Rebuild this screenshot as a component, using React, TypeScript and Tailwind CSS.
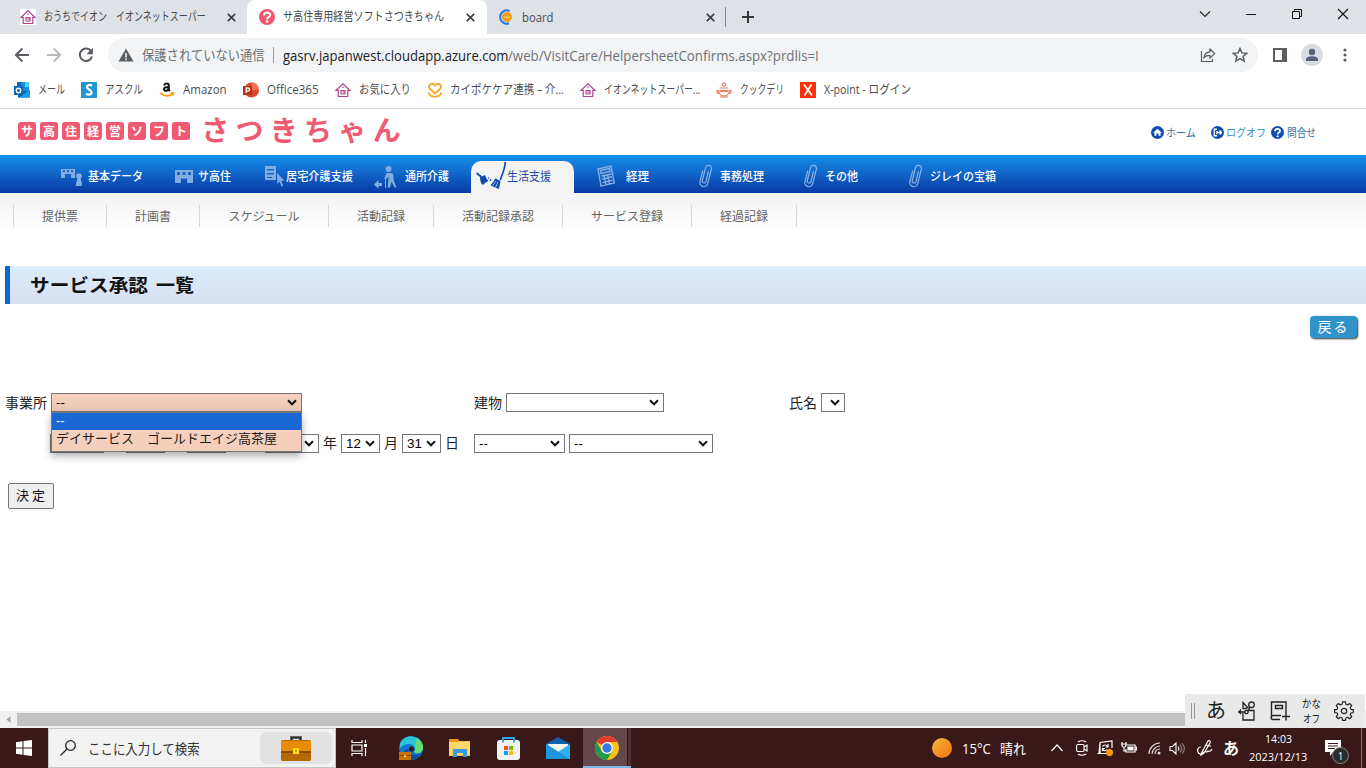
import React, { useLayoutEffect, useRef, useState } from "react";

const UI = "font-['Open_Sans','Noto_Sans_CJK_JP',sans-serif]";

/** Keeps a label on one line and condenses it to the width of its box. */
function Fit({ className = "", children }: { className?: string; children: React.ReactNode }) {
  const box = useRef<HTMLSpanElement>(null);
  const text = useRef<HTMLSpanElement>(null);
  const [scale, setScale] = useState(1);
  useLayoutEffect(() => {
    if (box.current && text.current) setScale(box.current.clientWidth / text.current.offsetWidth);
  }, []);
  return (
    <span ref={box} className={"block shrink-0 whitespace-nowrap " + className}>
      <span ref={text} className="inline-block origin-left" style={{ transform: `scaleX(${scale})` }}>
        {children}
      </span>
    </span>
  );
}

/* ---------- browser icons ---------- */

const Aeon = () => (
  <svg className="h-4 w-4 shrink-0" viewBox="0 0 16 16" fill="none" stroke="#b0438c" strokeWidth="1.2">
    <path fill="#fff" stroke="none" d="M0 0h16v16H0z" />
    <path d="M1.200 8.300 8 1.800l6.800 6.500h-2V14.500H3.200V8.300z" />
    <path d="M6 8.500h4V12H6zM8 4.500v1.500" />
    <path d="M7.500 10h2" />
  </svg>
);

const Cross = () => (
  <svg className="h-[9px] w-[9px] shrink-0" viewBox="0 0 9 9" stroke="#3c4043" strokeWidth="1.7">
    <path d="M.8.8l7.4 7.4M8.2.8.8 8.2" />
  </svg>
);

const Question = ({ className, color }: { className: string; color: string }) => (
  <svg className={className} viewBox="0 0 16 16" fill="none">
    <circle cx="8" cy="8" r="8" fill={color} />
    <path d="M5 6.400c0-3.900 6.200-3.700 6.200-.4 0 2-3 1.900-3 4.200" stroke="#fff" strokeWidth="2.200" />
    <circle cx="8.200" cy="12.600" r="1.300" fill="#fff" />
  </svg>
);

function TabStrip() {
  return (
    <div className="flex h-[34px] items-center bg-[#dee1e6] text-[12px] text-[#45494d]">
      <div className="flex h-full w-[247px] items-center pl-5">
        <Aeon />
        <Fit className="ml-2 w-[162px]">おうちでイオン　イオンネットスーパー</Fit>
        <span className="ml-[21px]"><Cross /></span>
      </div>
      <div className="flex h-full w-[240px] items-center rounded-t-[8px] bg-white pl-3">
        <Question className="h-4 w-4 shrink-0" color="#f1566f" />
        <Fit className="ml-2 w-[161px]">サ高住専用経営ソフトさつきちゃん</Fit>
        <span className="ml-[22px]"><Cross /></span>
      </div>
      <div className="flex h-full w-[239px] items-center pl-[11px]">
        <svg className="h-4 w-4 shrink-0" viewBox="0 0 16 16" fill="none">
          <path d="M11.5 2A6.6 6.6 0 1 0 11 14.2" stroke="#2478e8" strokeWidth="2" />
          <circle cx="9" cy="8" r="4.900" fill="#f59a0c" />
          <path d="M6 8.200h6" stroke="#ffd28a" strokeWidth="1.2" />
        </svg>
        <Fit className="ml-2 w-[31px] pt-px text-[12px]">board</Fit>
        <span className="ml-[153px]"><Cross /></span>
        <span className="ml-[10px] h-5 w-px bg-[#86898d]" />
      </div>
      <svg className="ml-[16px] h-[12px] w-[12px]" viewBox="0 0 12 12" stroke="#36393c" strokeWidth="2">
        <path d="M6 0v12M0 6h12" />
      </svg>
      <div className="ml-auto flex h-full w-[184px] items-start pt-[8px]">
        <svg className="h-[12px] w-[46px]" viewBox="0 0 46 12" fill="none" stroke="#222" strokeWidth="1.1"><path d="M18 3.5 23 8.5l5-5" /></svg>
        <svg className="h-[12px] w-[46px]" viewBox="0 0 46 12" stroke="#111"><path d="M18 6.5h10" /></svg>
        <svg className="h-[12px] w-[46px]" viewBox="0 0 46 12" fill="none" stroke="#111"><path d="M18.5 3.5h7v7h-7zM20.500 3.500v-2h7v7h-2" /></svg>
        <svg className="h-[12px] w-[46px]" viewBox="0 0 46 12" stroke="#111" strokeWidth="1.1"><path d="m18 1 10 10m0-10L18 11" /></svg>
      </div>
    </div>
  );
}

function Toolbar() {
  return (
    <div className="flex h-[42px] items-center bg-white pl-[14px]">
      <svg className="h-4 w-4" viewBox="0 0 16 16" fill="none" stroke="#5a5e62" strokeWidth="1.9"><path d="M15 8H2M8.300 1.500 1.800 8l6.500 6.500" /></svg>
      <svg className="ml-4 h-4 w-4" viewBox="0 0 16 16" fill="none" stroke="#b8babc" strokeWidth="1.9"><path d="M1 8h13M7.700 1.500 14.200 8l-6.500 6.500" /></svg>
      <svg className="ml-4 h-4 w-4" viewBox="0 0 16 16" fill="none" stroke="#5a5e62" strokeWidth="2"><path d="M13.300 4.500A6.200 6.200 0 1 0 14 9.500" /><path d="M14.900.8v6.400H8.500z" fill="#5a5e62" stroke="none" /></svg>
      <div className="ml-[14px] flex h-[34px] w-[1150px] items-center rounded-full bg-[#f1f3f4] pl-[10px]">
        <svg className="h-4 w-4" viewBox="0 0 16 16"><path d="M8 1.500 15.500 14.500H.5z" fill="#5a5e62" /><path d="M8 6v4.500M8 11.500v1.700" stroke="#fff" strokeWidth="1.4" /></svg>
        <Fit className="ml-2 w-[123px] pb-px text-[14px] text-[#6d7175]">保護されていない通信</Fit>
        <span className="ml-2 h-4 w-px bg-[#9b9ea2]" />
        <Fit className="ml-[9px] w-[225px] text-[14px] text-[#202124]">gasrv.japanwest.cloudapp.azure.com</Fit>
        <Fit className="w-[311px] text-[14px] text-[#6f7276]">/web/VisitCare/HelpersheetConfirms.aspx?prdlis=I</Fit>
        <svg className="ml-auto h-[16px] w-[16px]" viewBox="0 0 16 16" fill="none" stroke="#5a5e62" strokeWidth="1.2"><path d="M1.500 4v10.500h11V12M4 10.500c.5-4 3-5.500 6-5.700V2l4.700 4.600L10 11V8.300c-3-.1-4.700.8-6 2.200z" /></svg>
        <svg className="ml-[16px] mr-[10px] h-4 w-4" viewBox="0 0 16 16" fill="none" stroke="#5a5e62" strokeWidth="1.5"><path d="m8 1.500 1.900 4.400 4.800.4-3.600 3.200 1.100 4.700L8 11.700l-4.200 2.500 1.100-4.700L1.300 6.300l4.800-.4z" /></svg>
      </div>
      <svg className="ml-[15px] h-[14px] w-[14px]" viewBox="0 0 14 14"><path d="M1 1h12v12H1z" fill="none" stroke="#5a5e62" strokeWidth="2" /><path d="M9 1h4v12H9z" fill="#5a5e62" /></svg>
      <svg className="ml-[14px] h-[22px] w-[22px]" viewBox="0 0 22 22" fill="#55627a"><circle cx="11" cy="11" r="11" fill="#dadce2" /><circle cx="11" cy="8" r="3.2" /><path d="M5 17v-1.500c0-4.200 12-4.200 12 0V17z" /></svg>
      <svg className="ml-[20px] h-[14px] w-[4px]" viewBox="0 0 4 14" fill="#5a5e62"><circle cx="2" cy="2" r="1.600" /><circle cx="2" cy="7" r="1.600" /><circle cx="2" cy="12" r="1.600" /></svg>
    </div>
  );
}

function Bookmark({ icon, children }: { icon: React.ReactNode; children: React.ReactNode }) {
  return <div className="mr-4 flex items-center gap-2">{icon}{children}</div>;
}

function Bookmarks() {
  const i = "h-4 w-4 shrink-0";
  return (
    <div className="flex h-[33px] items-center border-b border-[#d9dbde] bg-white pb-1 pl-[14px] text-[12px] text-[#4a4d51]">
      <Bookmark icon={<svg className={i} viewBox="0 0 16 16"><path fill="#1490df" d="M3 0h12v9H3z" /><path fill="#50d0ff" d="M11 0h4v5h-4z" /><path fill="#1066b5" d="M3 0h4v5H3z" /><path fill="#0a62ad" d="M4 9h12v6.500H4z" /><path fill="#1a9be8" d="M16 7.500v8H5z" /><path fill="#0364b8" d="M0 4h9v9H0z" /><circle cx="4.500" cy="8.500" r="2.200" fill="none" stroke="#fff" strokeWidth="1.400" /></svg>}><Fit className="w-[27px]">メール</Fit></Bookmark>
      <Bookmark icon={<svg className={i} viewBox="0 0 16 16"><path fill="#2196d2" d="M0 0h16v16H0z" /><path d="M11 3.700C8.500 2 5.500 3.600 6 5.500c.5 2 4.300 2.200 4.500 4.700.1 2.500-3 3-5.500 1.600" fill="none" stroke="#fff" strokeWidth="2.300" /></svg>}><Fit className="w-[38px]">アスクル</Fit></Bookmark>
      <Bookmark icon={<svg className={i} viewBox="0 0 16 16" fill="none"><path d="M5 3.500C6 .8 9.800 1 9.800 3.500V7c0 1 .5 1.500 1 2M9.600 5C6.500 5 5 5.500 5 7.200c0 2.600 4.600 2 4.600-1" stroke="#111" strokeWidth="2" /><path d="M1 11c4.500 3.500 9 3.500 12.500 1M11.500 11l3-.2-.7 3" stroke="#f5a21b" strokeWidth="1.700" /></svg>}><Fit className="w-[44px]">Amazon</Fit></Bookmark>
      <Bookmark icon={<svg className={i} viewBox="0 0 16 16"><circle cx="8.500" cy="8" r="7.500" fill="#d8482a" /><path d="M8.500.5A7.500 7.500 0 0 1 16 8H8.500z" fill="#f0744e" /><path fill="#b7341a" d="M0 4h9v9H0z" /><path d="M3.200 11V6h1.600c2.400 0 2.400 3.200 0 3.200H3.500" fill="none" stroke="#fff" strokeWidth="1.300" /></svg>}><Fit className="w-[52px]">Office365</Fit></Bookmark>
      <Bookmark icon={<Aeon />}><Fit className="w-[52px]">お気に入り</Fit></Bookmark>
      <Bookmark icon={<svg className={i} viewBox="0 0 16 16" fill="none" stroke="#f4ac2a" strokeWidth="1.900"><path d="M8 11.500 2.600 6.500C.5 3.500 4.800-.3 8 3.500c3.200-3.800 7.500 0 5.400 3z" /><path d="M1.500 10.500c1 3.300 3.500 4.200 6.500 4.200s5.500-.9 6.500-4.200" /></svg>}><Fit className="-ml-px w-[114px]">カイポケケア連携 – 介...</Fit></Bookmark>
      <Bookmark icon={<Aeon />}><Fit className="w-[96px]">イオンネットスーパー...</Fit></Bookmark>
      <Bookmark icon={<svg className={i} viewBox="0 0 16 16" fill="none" stroke="#e98267" strokeWidth="1.200"><circle cx="8" cy="2.500" r="1.600" /><path d="M3.500 6h9M2.500 8c0 8 11 8 11 0M2.500 8.500H.7c0 2 1 3 2.500 3M13.500 8.500h1.800c0 2-1 3-2.500 3" /><path d="M3.500 9h9" strokeWidth="2.200" /><path d="M4 15h8" /></svg>}><Fit className="w-[44px]">クックデリ</Fit></Bookmark>
      <Bookmark icon={<svg className={i} viewBox="0 0 16 16"><path fill="#fa3205" d="M0 0h16v16H0z" /><path d="m4 2.500 8 11m-.5-11-7 11" stroke="#fff" strokeWidth="1.700" /></svg>}><Fit className="w-[87px]">X-point - ログイン</Fit></Bookmark>
    </div>
  );
}

/* ---------- web page ---------- */

function Header() {
  return (
    <header className="flex h-[46px] items-center bg-white pl-[18px] text-[#ef5a72]">
      <div className="flex gap-1 pb-[2px] text-[12px] font-bold text-white">
        {"サ高住経営ソフト".split("").map((c, n) => (
          <span key={n} className="flex h-[18px] w-[18px] items-center justify-center rounded-[3px] bg-[#ef5a72] pb-px">{c}</span>
        ))}
      </div>
      <div className="ml-[8px] flex pb-[7px] text-[28px] leading-none font-bold">
        {"さつきちゃん".split("").map((c, n) => (
          <span key={n} className="w-[34.300px] text-center">{c}</span>
        ))}
      </div>
      <div className="ml-auto flex items-center pr-[50px] text-[11px] text-[#2f6f9f]">
        <svg className="h-[13px] w-[13px]" viewBox="0 0 12 12"><circle cx="6" cy="6" r="6" fill="#124db0" /><path d="M2 6.300 6 2.500l4 3.800H8.800V9H7V7H5v2H3.200V6.300z" fill="#fff" /></svg>
        <Fit className="ml-[2px] w-[30px]">ホーム</Fit>
        <svg className="ml-[15px] h-[13px] w-[13px]" viewBox="0 0 12 12" fill="none" stroke="#fff" strokeWidth="1.200"><circle cx="6" cy="6" r="6" fill="#124db0" stroke="none" /><path d="M5.500 3H3v6h2.500M5.500 4.500v3M5.500 6h4M8 4.200 9.700 6 8 7.800" /></svg>
        <Fit className="ml-[2px] w-[40px] text-[#3b90c8]">ログオフ</Fit>
        <Question className="ml-[5px] h-[13px] w-[13px]" color="#124db0" />
        <Fit className="ml-[3px] w-[29px]">問合せ</Fit>
      </div>
    </header>
  );
}

const Clip = () => (
  <svg className="h-6 w-[14px]" viewBox="0 0 14 24" fill="none" stroke="#8db2e3" strokeWidth="1.200">
    <path transform="rotate(14 7 12)" d="M2.500 7.500v11.500a4 4 0 0 0 8 0V4a3 3 0 0 0-6 0v13.500a1.900 1.900 0 0 0 3.800 0V7" />
  </svg>
);

function Nav() {
  const cell = "flex h-full items-start pt-[9px]";
  const label = "mt-[3px]";
  return (
    <nav className="flex h-[38px] bg-gradient-to-b from-[#168fe9] via-[#1164c8] to-[#0b39a3] pl-[61px] text-[12px] leading-[18px] font-medium text-white">
      <div className={cell + " w-[114px]"}>
        <svg className="mt-[4px] h-[18px] w-[21px]" viewBox="0 0 21 18" fill="#83ade0"><path fillRule="evenodd" d="M0 1h14v9h-4V6H4v4H0zm2 1v2h2V2zm4 0v2h2V2zm4 0v2h2V2z" /><circle cx="18" cy="8" r="2.800" /><path d="m16.500 10-2 8h7l-2-8z" /></svg>
        <Fit className={label + " ml-[6px] w-[55px]"}>基本データ</Fit>
      </div>
      <div className={cell + " w-[90px]"}>
        <svg className="mt-[6px] h-[13px] w-[18px]" viewBox="0 0 18 13" fill="#83ade0"><path fillRule="evenodd" d="M0 0h18v13h-6V8.500H6V13H0zm2 2v3h3V2zm5.500 0v3h3V2zM13 2v3h3V2z" /></svg>
        <Fit className={label + " ml-[5px] w-[33px]"}>サ高住</Fit>
      </div>
      <div className={cell + " w-[109px]"}>
        <svg className="mt-[2px] h-[21px] w-[20px]" viewBox="0 0 20 21" fill="#83ade0"><path fillRule="evenodd" d="M0 0h11v14H0zm2 3v1.500h7V3zm0 4v1.500h7V7zm0 4v1h5v-1z" /><path d="m12 7 .3 11 2.200-2.400 2 5 1.800-.7-2-5 3-.5z" /></svg>
        <Fit className={label + " ml-px w-[67px]"}>居宅介護支援</Fit>
      </div>
      <div className={cell + " w-[97px]"}>
        <svg className="mt-[2px] h-[22px] w-[23px]" viewBox="0 0 23 22" fill="#83ade0"><circle cx="14.500" cy="3" r="3" /><path d="M12.500 7h4.500c1.500 0 2 1 2.300 3l.6 5 2.600 6.500h-2L17.500 15.500l-1.500 6H13.500l1-8V10.500l-2.500 3-1.700-.9z" /><path d="M11.500 13v9" stroke="#83ade0" /><path d="M0 18.500 4.500 14v3H8v3H4.500v3z" /></svg>
        <Fit className={label + " ml-[8px] w-[44px]"}>通所介護</Fit>
      </div>
      <div className="mt-[6px] flex h-8 w-[103px] items-start rounded-t-[10px] bg-[#f3f3f3] pl-[5px] font-normal text-[#1c4ea8]">
        <svg className="h-7 w-[30px]" viewBox="0 0 30 28" fill="#0f47b0"><path d="m.5 12 5 4" stroke="#0f47b0" strokeWidth="1.800" /><path d="M4 15.500c2 .3 3.500-.5 5-1.500.5 2 1.500 4 3.500 6-2 .8-4 2-5.500 4C4.500 22.500 4 19 4 15.500z" /><circle cx="12.500" cy="17" r=".7" /><circle cx="14.500" cy="19" r=".9" /><path d="M29.300 1c-.3 7-3 12-5 18" stroke="#0f47b0" strokeWidth="1.700" fill="none" /><path d="m19.500 17.500 5 2.500-1.500 8-8.500-3.500z" /><path d="m16.500 25 3.500-5M19.500 26.500l2.500-5.500" stroke="#f3f3f3" strokeWidth=".7" /></svg>
        <Fit className="mt-[6px] ml-px w-[44px]">生活支援</Fit>
      </div>
      <div className={cell + " w-[125px] pl-[23px]"}>
        <svg className="mt-[1px] h-[22px] w-[18px]" viewBox="0 0 18 22" fill="none" stroke="#83ade0" strokeWidth="1.400"><path d="M1 4 14 1l3.300 17L4 21zM3.500 5.500l9-2 .5 3-9 2zM4.500 11l10-2M5 14l10-2.200M5.500 17.500l10-2.200M7 10l2 10M10.500 9.500l2 9.500" /></svg>
        <Fit className={label + " ml-[11px] w-[23px]"}>経理</Fit>
      </div>
      <div className={cell + " w-[105px]"}><Clip /><Fit className={label + " ml-[7px] w-[44px]"}>事務処理</Fit></div>
      <div className={cell + " w-[105px]"}><Clip /><Fit className={label + " ml-[7px] w-[33px]"}>その他</Fit></div>
      <div className={cell}><Clip /><Fit className={label + " ml-[7px] w-[66px]"}>ジレイの宝箱</Fit></div>
    </nav>
  );
}

function SubNav() {
  const c = "flex h-[22px] items-center justify-center border-l border-[#d9d9d9] pb-px";
  return (
    <div className="flex h-10 bg-gradient-to-b from-[#f2f2f2] to-white pt-3 pl-[13px] text-[12px] text-[#646464]">
      <div className={c + " w-[93px]"}>提供票</div>
      <div className={c + " w-[93px]"}>計画書</div>
      <div className={c + " w-[129px]"}>スケジュール</div>
      <div className={c + " w-[105px]"}>活動記録</div>
      <div className={c + " w-[129px]"}>活動記録承認</div>
      <div className={c + " w-[129px]"}>サービス登録</div>
      <div className={c + " w-[106px] border-r"}>経過記録</div>
    </div>
  );
}

function Select({ className, children }: { className: string; children?: React.ReactNode }) {
  return (
    <span className={"flex h-[19px] shrink-0 items-center justify-between border border-[#767676] pr-[4px] pl-[4px] font-['Liberation_Sans','Noto_Sans_CJK_JP',sans-serif] text-[13.333px] leading-none text-black " + className}>
      <span>{children}</span>
      <svg className="h-[7px] w-[10px] shrink-0" viewBox="0 0 10 7" fill="none" stroke="#111" strokeWidth="2"><path d="m1 1.300 4 4 4-4" /></svg>
    </span>
  );
}

function Form() {
  return (
    <main className="text-[14px] leading-[19px] text-[#222]">
      <div className="flex h-[19px] items-center pl-[5px]">
        <span className="w-[46px]">事業所</span>
        <div className="relative">
          <Select className="w-[251px] bg-gradient-to-b from-[#f7d1bf] to-[#e9c5b4]">--</Select>
          <div className="absolute top-[19px] left-0 z-10 h-[40px] w-[251px] border border-[#767676] bg-[#f6cfbc] font-['Liberation_Sans','Noto_Sans_CJK_JP',sans-serif] text-[13px] leading-[17px] text-[#201a18] shadow-[0_4px_8px_rgba(0,0,0,0.32)]">
            <div className="h-[17px] bg-[#1967d2] pl-[4px] leading-[16px] text-white">--</div>
            <Fit className="ml-[4px] w-[221px]">デイサービス　ゴールドエイジ高茶屋</Fit>
          </div>
        </div>
        <span className="ml-[172px] w-8">建物</span>
        <Select className="w-[158px]" />
        <span className="ml-[125px] w-8">氏名</span>
        <Select className="w-[24px]" />
      </div>
      <div className="mt-[22px] flex h-[19px] items-center pl-[50px]">
        <Select className="w-[54px]" />
        <Select className="ml-[22px] w-[39px]" />
        <Select className="ml-[22px] w-[39px]" />
        <Select className="ml-[39px] w-[54px]" />
        <span className="w-[22px] pb-[2px] text-center">年</span>
        <Select className="w-[39px]">12</Select>
        <span className="w-[22px] pb-[2px] text-center">月</span>
        <Select className="w-[39px]">31</Select>
        <span className="w-[22px] pb-[2px] text-center">日</span>
        <Select className="ml-[11px] w-[91px]">--</Select>
        <Select className="ml-1 w-[144px]">--</Select>
      </div>
      <button className="mt-[30px] ml-2 flex h-[26px] w-[46px] items-center justify-center rounded-[2px] border border-[#767676] bg-[#efefef] pr-px pb-[3px] text-[13px] text-[#111]">決 定</button>
    </main>
  );
}

/* ---------- desktop ---------- */

function ImeBar() {
  const s = "#222";
  return (
    <div className="absolute top-[694px] left-[1185px] z-20 flex h-[34px] w-[180px] items-center bg-[#e9e9e9] pb-px text-[#1c1c1c]">
      <span className="ml-[6px] h-4 w-[4px] border-x border-[#999]" />
      <span className="ml-[11px] w-5 text-center text-[20px] leading-none">あ</span>
      <svg className="ml-[12px] h-5 w-[18px]" viewBox="0 0 18 20" fill="none" stroke={s} strokeWidth="1.300"><path d="M5 12v7h11V9.500H9M5 8V1.500l5.500 6M5 7.500h4" /><circle cx="13.500" cy="3.800" r="2.800" /><path d="m12 6-1.500 3.500" /><path d="M0 11h7M3 8.500l-2 2.500 2 2" /><circle cx="8.500" cy="11" r="1.700" /></svg>
      <svg className="ml-[14px] h-5 w-[20px]" viewBox="0 0 20 20" fill="none" stroke={s} strokeWidth="1.400"><path d="M10 18.500H3c-3 0-2-4 0-4h8M1.500 17V1H16v11M5.500 4.500h7v3h-7zM16 11.500v8M12 15.500h8" /></svg>
      <div className="ml-[12px] w-[20px] text-center text-[11px] leading-[15px]"><Fit className="w-[19px]">かな</Fit><Fit className="ml-px w-[17px]">オフ</Fit></div>
      <svg className="ml-[12px] h-5 w-5" viewBox="0 0 20 20" fill="none" stroke={s} strokeWidth="1.200" strokeLinejoin="round"><circle cx="10" cy="10" r="2.700" /><path d="M8.500.8h3l.4 2.500 1.700.7 2-1.500 2.100 2.100-1.500 2 .7 1.700 2.400.3v3l-2.400.4-.7 1.600 1.500 2.100-2.100 2-2-1.400-1.700.7-.4 2.400h-3l-.4-2.400-1.700-.7-2 1.400-2.100-2 1.500-2.100-.7-1.600-2.500-.4v-3l2.500-.3.7-1.700-1.500-2 2.100-2.100 2 1.500 1.700-.7z" /></svg>
    </div>
  );
}

function Taskbar() {
  return (
    <footer className="flex h-10 items-center bg-[#391819] text-white">
      <div className="flex w-12 justify-center"><svg className="h-4 w-4" viewBox="0 0 16 16" fill="#fff"><path d="M0 2.200 6.500 1.300v6.200H0zM7.500 1.100 16 0v7.500H7.500zM0 8.500h6.500v6.200L0 13.800zM7.500 8.500H16V16l-8.500-1.100z" /></svg></div>
      <div className="flex h-10 w-[288px] items-center border border-[#c4c4c4] bg-[#f2f2f2] pl-[11px] text-[14px] text-[#333]">
        <svg className="h-4 w-4" viewBox="0 0 16 16" fill="none" stroke="#222" strokeWidth="1.300"><circle cx="10.500" cy="5.500" r="4.800" /><path d="M7 9 .5 15.500" /></svg>
        <Fit className="ml-[12px] w-[112px]">ここに入力して検索</Fit>
        <div className="ml-[60px] flex h-8 w-[72px] items-center justify-center rounded-[6px] bg-[#e2e2e2]">
          <svg className="h-[25px] w-[30px]" viewBox="0 0 30 25"><path d="M10.500 5V1.500h9V5" fill="none" stroke="#343434" strokeWidth="2.500" /><rect y="4" width="30" height="21" rx="1.500" fill="#b56a05" /><path d="M0 5h30v11H0z" fill="#e88b06" /><path d="M0 15h30v2H0z" fill="#8c4a00" /><path d="M12 12h6v6h-6z" fill="#ffdc26" /><path d="M14 14h2v2h-2z" fill="#d69a00" /></svg>
        </div>
      </div>
      <svg className="ml-[15px] h-4 w-[17px]" viewBox="0 0 17 16" fill="none" stroke="#fff" strokeWidth="1.200"><path d="M1 0v2.500h10V0M1 5h10v6H1zM1 16v-2.500h10V16M14.500 0v3M14.500 8v8" /><path d="M13 4h3v3h-3z" fill="#fff" stroke="none" /></svg>
      <svg className="ml-[31px] h-6 w-6" viewBox="0 0 24 24"><circle cx="12" cy="12" r="12" fill="#1177d1" /><path d="M1 8C4-3 24-2 24 12c0 5-6 6-9 4 2-2 1-8-5-8-4 0-7 2-9 4z" fill="#2fc2d5" /><path d="M18 2c5 3 7 8 5.500 12-2 4-6 4-8.500 2 2-2 2-4 1-6z" fill="#67dc70" /><path d="M9 13c0 5 6 8 12 5-3 7-12 8-16 2-1-4 0-7 4-7z" fill="#124d9c" /><circle cx="12.500" cy="13" r="2.600" fill="#391819" /><path d="M0 16h12v8H0z" fill="#c67408" /><path d="M0 19h12v1H0z" fill="#884500" /><path d="M5 19h2v2H5z" fill="#ffd323" /></svg>
      <svg className="ml-[26px] h-[20px] w-[22px]" viewBox="0 0 22 20"><path d="M0 1h9l1 2h11v15H0z" fill="#f5c247" /><path d="M0 1h9v3H0z" fill="#e49b0c" /><path d="M0 4h21v13H0z" fill="#ffd66b" /><path d="M4 11h14v8h-4v-4H8v4H4z" fill="#369be0" /></svg>
      <svg className="ml-[26px] h-6 w-[23px]" viewBox="0 0 23 24"><rect y="4" width="23" height="20" rx="3" fill="#f2f2f2" /><path d="M6 6.500V2h11v4.500" fill="none" stroke="#27a7e8" strokeWidth="1.800" /><path d="M7 10h4v4H7z" fill="#f25022" /><path d="M12 10h4v4h-4z" fill="#7fba00" /><path d="M7 15h4v4H7z" fill="#00a4ef" /><path d="M12 15h4v4h-4z" fill="#ffb900" /></svg>
      <svg className="ml-[26px] h-6 w-6" viewBox="0 0 24 24"><path d="M0 8 12 1l12 7v6H0z" fill="#1060b0" /><path d="M2 8h20v8H2z" fill="#f4f4f4" /><path d="m0 8 12 8 12-8v15H0z" fill="#2bb2ee" /><path d="m0 8 24 15H0z" fill="#1d96dc" /></svg>
      <div className="ml-[13px] flex h-10 w-[48px] border-b-2 border-[#76b9ed] bg-[#64474a]">
        <div className="flex w-[44px] items-center pt-[2px] pl-3"><svg className="h-6 w-6" viewBox="0 0 24 24"><circle cx="12" cy="12" r="12" fill="#fbc116" /><path d="M12 12 1.600 6A12 12 0 0 1 22.400 6H12z" fill="#e33b2e" /><path d="M1.600 6A12 12 0 0 0 12 24l5.200-9-5.200 3-5.200-3z" fill="#229a4c" /><circle cx="12" cy="12" r="6" fill="#fff" /><circle cx="12" cy="12" r="4.700" fill="#3478ea" /></svg></div>
        <div className="w-[4px] border-l border-[#2d1415] bg-[#503235]" />
      </div>
      <span className="ml-[301px] h-5 w-5 rounded-full bg-gradient-to-br from-[#f6b637] to-[#f06f13]" />
      <Fit className="ml-[10px] w-[29px] text-[14px]">15°C</Fit>
      <Fit className="ml-[9px] w-[26px] text-[14px]">晴れ</Fit>
      <div className="flex h-full items-center">
        <svg className="ml-[25px] h-3 w-3" viewBox="0 0 12 12" fill="none" stroke="#fff" strokeWidth="1.200"><path d="m.5 9 5.500-6L11.500 9" /></svg>
        <svg className="ml-[13px] h-4 w-[12px]" viewBox="0 0 12 16" fill="none" stroke="#fff" strokeWidth="1.100"><rect x=".6" y="4.500" width="7.500" height="7" rx="1.500" /><path d="m8 7 3-2v6L8 9M2 2c2-1.700 6-1.700 8 0M2 14c2 1.700 6 1.700 8 0" /></svg>
        <svg className="ml-[9px] h-4 w-4" viewBox="0 0 16 16" fill="none" stroke="#fff" strokeWidth="1.200"><path d="M15 8V1L3 2.500 2 13.500h8M.5 13.500H3M3 2.500v11M5.500 6.500c1-2 4-2 5 0M11 4v3H8.500M10 9.500c-1 1.500-4 1.500-4.500-.5M5.500 11V8.500H8" /><circle cx="12.500" cy="12.500" r="3.500" fill="#ff9818" stroke="none" /></svg>
        <svg className="ml-[8px] h-[14px] w-4" viewBox="0 0 16 14" fill="none" stroke="#fff" strokeWidth="1.200"><path d="M6 4h8v7H5V8M14 6h1.500v3H14M1 1v3c0 3 4 3 4 0V1M0 3h6M3 6v4h2" /><path d="M7 6h5v3H7z" fill="#fff" /></svg>
        <svg className="ml-[11px] h-[13px] w-[13px]" viewBox="0 0 13 13" fill="none" stroke="#ddd" strokeWidth="1.100"><path d="M1 12C1 6 6 1 12 1M4 12c0-4 4-8 8-8M7 12c0-3 2-5 5-5" /><circle cx="11" cy="11" r="1" fill="#fff" /></svg>
        <svg className="ml-[8px] h-[13px] w-[16px]" viewBox="0 0 16 13" fill="none" stroke="#fff" strokeWidth="1.100"><path d="M1 4.500h2.500L7 1v11L3.500 8.500H1zM9 4.500c1 1.200 1 2.800 0 4" /><path d="M11 2.500c2 2.500 2 5.500 0 8M13 1c3 3.500 3 7.500 0 11" stroke="#9b8b8b" /></svg>
        <svg className="ml-[12px] h-4 w-4" viewBox="0 0 16 16" fill="none" stroke="#fff" strokeWidth="1.200"><path d="M5 12 11 1c1-1 3 0 2 2L7 13l-3 2zM4 7C1 7 0 10 1 12c1 3 4 2 6 0 2-1 3 1 4-1 2 1 3 0 4-2M9 5l5 1" /></svg>
      </div>
      <span className="ml-[10px] w-4 pb-px text-center text-[16px] leading-none font-bold">あ</span>
      <div className="ml-[9px] flex w-[60px] flex-col items-center text-[11px] leading-[18px]"><Fit className="w-[27px]">14:03</Fit><Fit className="w-[58px]">2023/12/13</Fit></div>
      <div className="relative ml-[17px] h-10 w-[26px]">
        <svg className="mt-[12px] h-4 w-4" viewBox="0 0 16 16"><path d="M0 0h16v12H8l-3 4v-4H0z" fill="#fff" /><path d="M3 3.500h10M3 6h10M3 8.500h7" stroke="#391819" /></svg>
        <span className="absolute top-[19px] left-[7px] flex h-[17px] w-[17px] items-center justify-center rounded-full border border-[#8b8585] bg-[#2c2c2c] text-[10px] leading-none">1</span>
      </div>
      <span className="ml-auto mr-[4px] h-10 w-px bg-[#88777a]" />
    </footer>
  );
}

export default function App() {
  return (
    <div className={"relative flex h-[768px] w-[1366px] flex-col overflow-hidden bg-white " + UI}>
      <TabStrip />
      <Toolbar />
      <Bookmarks />
      <div className="flex h-[602px] flex-col font-['Noto_Sans_CJK_JP',sans-serif]">
        <Header />
        <Nav />
        <SubNav />
        <h1 className="mt-[33px] ml-[5px] flex h-[38px] shrink-0 items-center border-l-[5px] border-[#1067ca] bg-gradient-to-b from-[#d9edfb] to-[#d8dff0] pb-px pl-5 text-[18.500px] font-bold text-[#111]">
          <Fit className="w-[118px]">サービス承認</Fit>
          <Fit className="ml-[8px] w-[38px]">一覧</Fit>
        </h1>
        <div className="mt-3 flex justify-end pr-[9px]">
          <button className="flex h-[22px] w-[47px] items-center justify-center rounded-[4px] bg-[#3093c9] pb-px text-[14px] tracking-[2px] text-white shadow-[1px_1px_2px_#333]">戻る</button>
        </div>
        <div className="mt-[55px]"><Form /></div>
      </div>
      <div className="flex h-[17px] shrink-0 items-center bg-[#f1f1f1]">
        <svg className="mx-[6px] h-[7px] w-[5px]" viewBox="0 0 5 7" fill="#a0a0a0"><path d="M4.500 0v7L.5 3.500z" /></svg>
        <span className="h-[13px] w-[1169px] bg-[#c1c1c1]" />
      </div>
      <Taskbar />
      <ImeBar />
    </div>
  );
}
